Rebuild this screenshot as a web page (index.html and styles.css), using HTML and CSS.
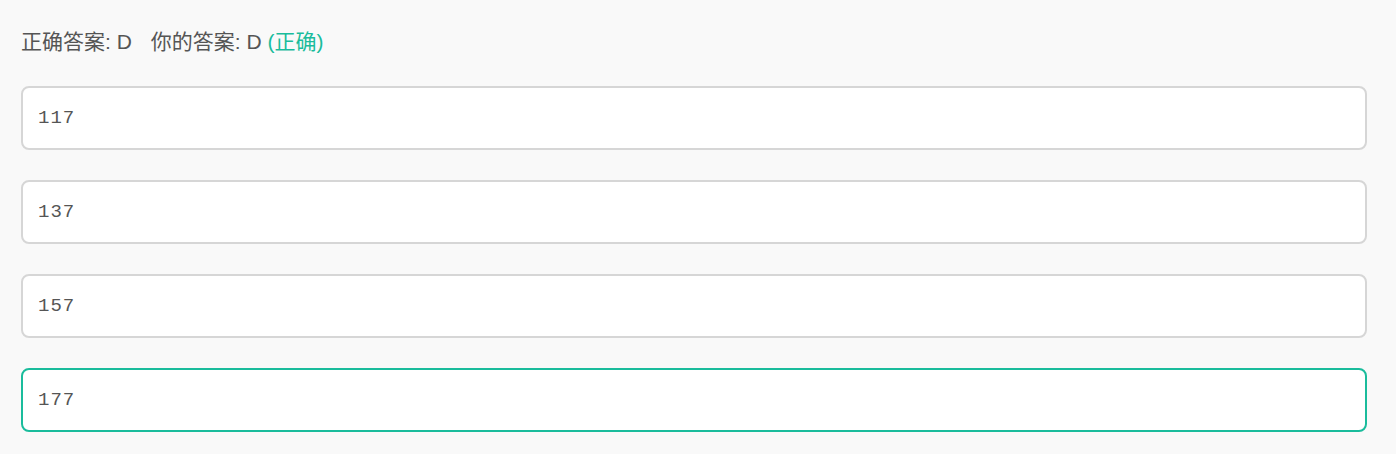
FILE: index.html
```html
<!DOCTYPE html>
<html lang="zh-CN">
<head>
    <meta charset="UTF-8">
    <title>答案</title>
    <link rel="stylesheet" href="styles.css">
</head>
<body>
    <div class="result">
        <p class="answer-line">正确答案: D<span class="mine">你的答案: D <span class="correct">(正确)</span></span></p>
        <div class="option">117</div>
        <div class="option">137</div>
        <div class="option">157</div>
        <div class="option selected">177</div>
    </div>
</body>
</html>
```

FILE: styles.css
```css
body {
    font-family: 'Liberation Sans', 'Noto Sans CJK SC', sans-serif;
    background-color: #f9f9f9;
    margin: 0;
    padding: 0;
}

.result {
    padding: 0 29px 0 21px;
}

.answer-line {
    font-size: 21px;
    color: #555;
    margin: 0;
    padding: 29px 0 31px;
    line-height: 26px;
}

.mine {
    margin-left: 19px;
}

.correct {
    color: #1abc9c;
}

.option {
    background-color: #fff;
    border: 2px solid #d6d6d6;
    border-radius: 8px;
    height: 60px;
    line-height: 60px;
    padding: 0 15px;
    margin-bottom: 30px;
    font-family: 'Liberation Mono', monospace;
    font-size: 19px;
    letter-spacing: 1px;
    color: #555;
}

.option.selected {
    border-color: #1abc9c;
}
```
